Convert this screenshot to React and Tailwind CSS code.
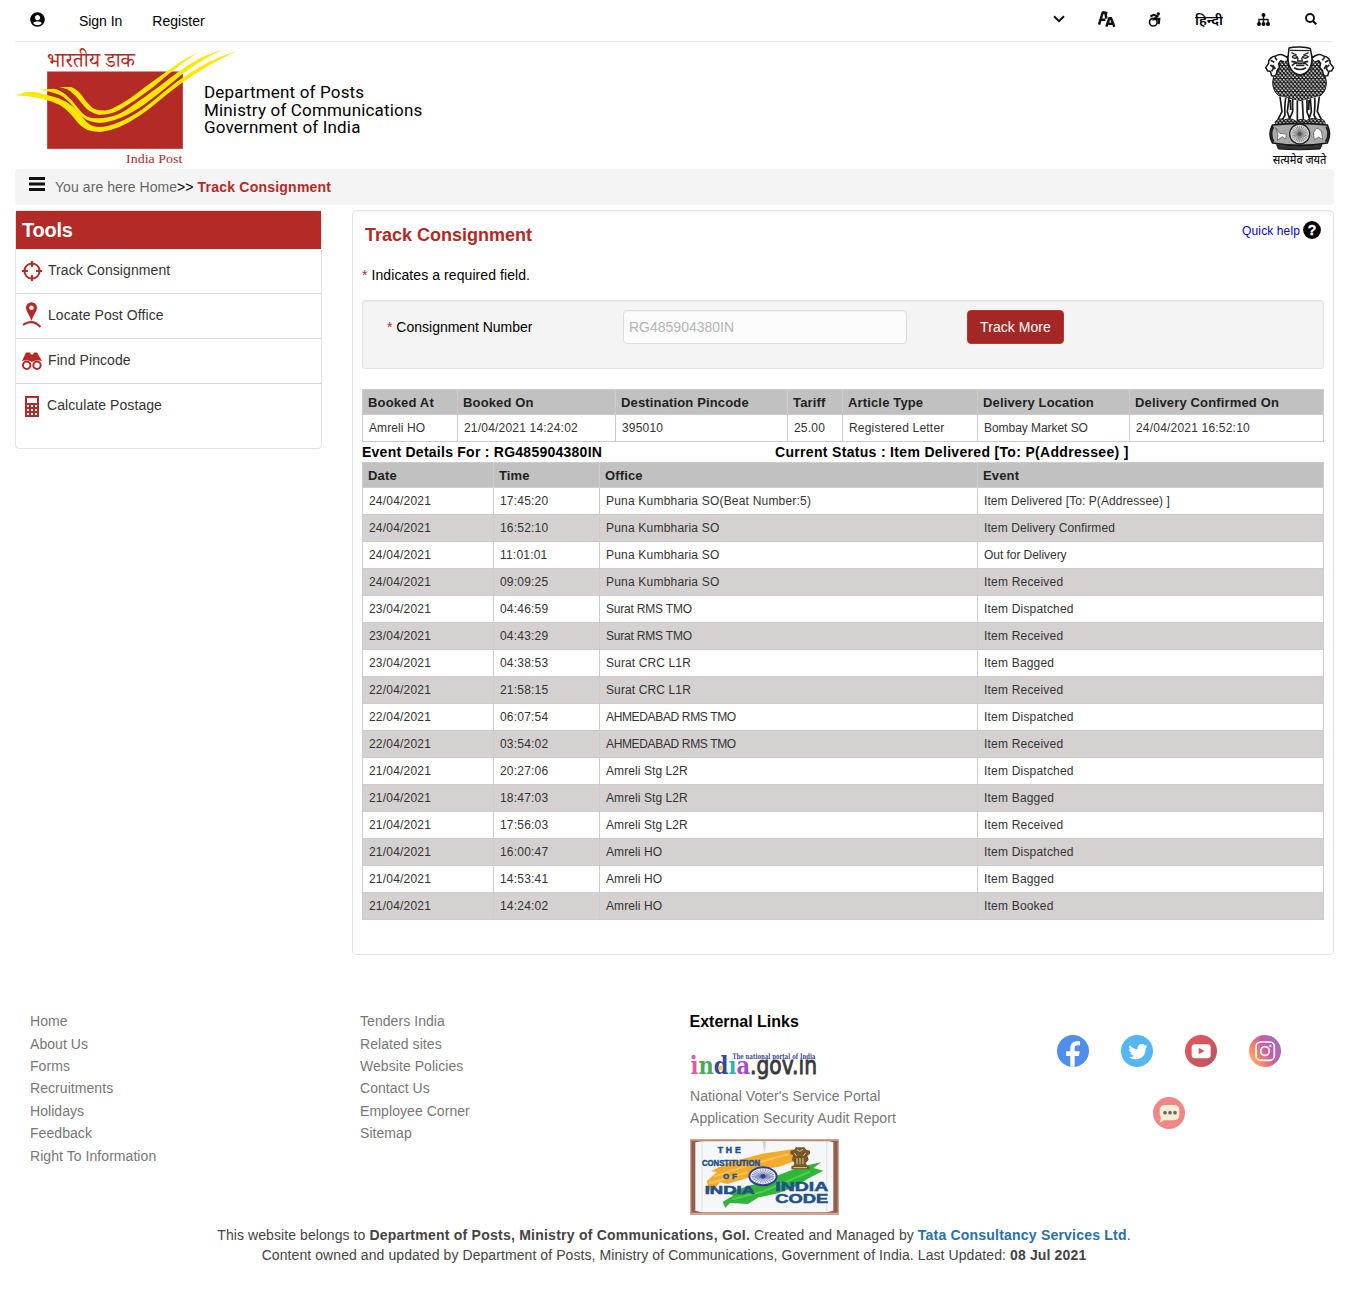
import React from "react";
import { FaUserCircle } from "react-icons/fa";

const red = "#b42a26";

function PostLogo() {
  return (
    <svg viewBox="45 138 666 360" className="h-[120px] w-[222px] shrink-0 overflow-visible">
      <text x="141" y="200" fontFamily="Noto Serif Devanagari, Noto Sans Devanagari, serif" fontSize="64" fill={red} textLength="264" lengthAdjust="spacingAndGlyphs">भारतीय डाक</text>
      <rect x="141.500" y="214.500" width="407" height="232" fill={red} />
      <g fill="#ffe800" transform="translate(30 126)">
        <path d="M15 160L50 150Q80 147 111 159Q175 172 208 213C225 237 240 255 268 255Q320 253 395 203Q430 177 470 143Q525 98 600 58Q640 40 680 28Q640 46 600 69Q550 98 510 127Q475 153 440 182Q410 207 388 221Q330 262 272 270Q225 271 202 241Q178 206 148 188Q95 164 15 160Z" />
        <path d="M88 143L130 140Q145 141 165 156Q190 177 208 203C225 225 242 230 270 229Q312 226 345 206Q405 166 460 124Q510 83 560 54Q600 34 635 24Q598 41 560 66Q520 92 488 121Q450 153 405 186Q330 239 268 243Q225 239 208 215Q172 169 150 159Q125 148 88 143Z" />
        <path d="M148 135H183Q200 141 214 158Q235 189 252 200Q270 208 293 205Q330 192 382 153Q440 109 510 61Q538 42 562 33Q535 49 510 70Q470 100 430 135Q380 174 330 203Q300 219 265 218Q238 213 220 190Q190 151 172 142Z" />
      </g>
      <text x="378" y="490" fontFamily="Liberation Serif, serif" fontSize="40" fill={red} textLength="169" lengthAdjust="spacingAndGlyphs">India Post</text>
    </svg>
  );
}

function Emblem() {
  return (
    <svg viewBox="705 138 207 360" className="h-[120px] w-[69px] shrink-0 overflow-visible">
      <defs>
        <pattern id="mane" width="11" height="13" patternUnits="userSpaceOnUse">
          <rect width="11" height="13" fill="#1c1c1c" />
          <path d="M1 3Q3 8 5 4M6.500 9Q8.500 14 10.500 10" fill="none" stroke="#fff" strokeWidth="3.400" />
        </pattern>
      </defs>
      <path d="M745 180L741 212C722 235 724 272 748 288L768 292L786 297L809 305L833 297L850 292L870 288C893 272 895 235 876 212L872 180L846 168L845 205L810 228L776 205L774 168Z" fill="url(#mane)" stroke="#111" strokeWidth="3" />
      <g fill="#fff" stroke="#151515" strokeWidth="4.500" strokeLinejoin="round">
        <path d="M774 175C762 164 748 160 738 168C722 170 714 180 716 190L707 203L713 213L721 214L725 227C737 232 741 221 741 212L748 202L746 190L752 182L762 186" />
        <path d="M846 175C856 164 870 160 880 168C895 170 902 180 900 190L911 203L904 213L897 214L893 227C881 232 878 221 878 212L869 202L872 190L866 182L856 186" />
        <path d="M777 144C792 140 826 140 841 146L846 174C846 199 835 222 810 225C786 222 774 199 774 174Z" />
      </g>
      <g fill="none" stroke="#222" strokeWidth="4">
        <path d="M780 151L839 152M784 158L800 165M836 158L820 165M786 170Q795 163 802 171Q796 179 786 170M817 171Q826 163 835 170Q826 179 817 171M804 172L803 183H817L815 172" />
        <path d="M784 184L800 187M835 184L820 187M786 197Q794 186 810 190Q825 186 834 197M792 203Q810 214 828 203" strokeWidth="5" />
        <path d="M722 181L733 187M721 195L731 203L725 214M728 195L736 207M896 181L885 187M898 195L888 203L894 214M890 195L882 207M735 172L741 181M884 172L877 181" strokeWidth="5" />
        <path d="M798 196H823" strokeWidth="5" />
      </g>
      <path d="M748 288L755 338L744 362H876L862 338L868 288L834 297L810 304L785 297Z" fill="#fff" />
      <g fill="none" stroke="#181818" strokeWidth="5">
        <path d="M750 290L756 335L744 358M767 294Q763 325 765 345L754 364M777 294L772 335L780 360M788 297V335L778 358M802 302V360M817 302L820 360M831 298V335L840 360M841 295L844 335L836 360M854 293Q856 325 852 345L862 364M868 290L862 335L874 358M781 300L782 330M837 300L836 330" />
      </g>
      <path d="M735 366Q745 351 763 360Q782 351 798 364Q814 353 829 362Q851 350 867 359Q880 352 886 370L881 378H740Z" fill="url(#mane)" stroke="#222" strokeWidth="3" />
      <path d="M728 375Q809 365 892 375Q905 401 892 429Q809 443 728 429Q712 402 728 375Z" fill="#aaa" stroke="#151515" strokeWidth="5" />
      <path d="M730 380Q718 403 731 425M889 380Q901 403 887 425" fill="none" stroke="#222" strokeWidth="6" />
      <path d="M737 383L748 399L769 403L767 417L757 410L742 421L744 404ZM850 398L861 384L874 393L878 419L866 411L853 419Z" fill="#fff" stroke="#444" strokeWidth="2" />
      <circle cx="809" cy="402" r="30" fill="#ddd" stroke="#222" strokeWidth="4" />
      {Array.from({ length: 12 }).map((_, i) => (
        <path key={i} d="M809 377V427" stroke="#666" strokeWidth="2" transform={`rotate(${i * 15} 809 402)`} />
      ))}
      <circle cx="809" cy="402" r="6" fill="#555" />
      <path d="M740 434Q809 443 876 434L870 447Q809 452 745 447Z" fill="#333" stroke="#111" strokeWidth="3" />
      <text x="728" y="491" fontFamily="Noto Sans Devanagari, sans-serif" fontSize="36" fontWeight="500" fill="#111" textLength="161" lengthAdjust="spacingAndGlyphs">सत्यमेव जयते</text>
    </svg>
  );
}

const TopBar = () => (
  <div className="flex h-[42px] justify-between border-b border-[#e7e7e7] text-black">
    <div className="flex h-[42px] items-center pl-[15px]">
      <FaUserCircle className="-mt-[4px] size-[15px]" />
      <span className="ml-[34px] tracking-[-0.05px]">Sign In</span>
      <span className="ml-[30px] tracking-[0.05px]">Register</span>
    </div>
    <div className="flex h-[38px] items-center pr-[17px]">
      <svg viewBox="0 0 12 8" className="mr-[34px] h-2 w-3"><path d="M1 1.200L6 6.200L11 1.200" fill="none" stroke="#111" strokeWidth="2" /></svg>
      <svg viewBox="0 0 48 48" className="mr-[34px] size-4 overflow-visible" fill="none" stroke="#111" strokeWidth="7.500">
        <path d="M0 41L11 5H19L22 23M5 26H19M11 4L25 7" /><path d="M22 47L31 22H36L46 47M26 38H43" />
      </svg>
      <svg viewBox="0 0 36 44" className="mr-[34px] h-[15px] w-3 overflow-visible" fill="none" stroke="#111" strokeWidth="5">
        <circle cx="13" cy="30" r="11.500" /><circle cx="28" cy="5" r="4" fill="#111" strokeWidth="2" /><path d="M4 13L14 8L25 12L16 21L31 20L29 36" strokeWidth="6.500" />
      </svg>
      <svg viewBox="0 0 28 18" className="mt-[2px] mr-[34px] h-[18px] w-[28px]"><text x="0" y="13.500" fontFamily="Noto Sans Devanagari, sans-serif" fontSize="13" fontWeight="600" textLength="28" lengthAdjust="spacingAndGlyphs">हिन्दी</text></svg>
      <svg viewBox="0 0 13 13" className="mr-[35px] size-[13px]"><circle cx="6.500" cy="2" r="2" /><circle cx="2" cy="11" r="2" /><circle cx="6.500" cy="11" r="2" /><circle cx="11" cy="11" r="2" /><path d="M6.500 2V11M2 11V6.500H11V11" fill="none" stroke="#111" strokeWidth="1.400" /></svg>
      <svg viewBox="0 0 12 12" className="size-3" fill="none" stroke="#111"><circle cx="5" cy="5" r="4" strokeWidth="1.900" /><path d="M8 8L11.300 11.300" strokeWidth="2.200" /></svg>
    </div>
  </div>
);

const TrackIcon = () => (
  <svg viewBox="0 0 20 20" className="size-5" fill="none" stroke={red} strokeWidth="2"><circle cx="10" cy="10" r="7.600" /><path d="M10 0V6M10 14V20M0 10H6M14 10H20" /></svg>
);
const PinIcon = () => (
  <svg viewBox="0 0 20 26" className="-mt-[3px] h-[26px] w-5"><path d="M9.500 19C8 14 4 9 4 5.700A5.500 5.500 0 0 1 15 5.700C15 9 11 14 9.500 19Z" fill={red} /><circle cx="9.500" cy="5.700" r="2.200" fill="#fff" /><path d="M1 22.800Q11 16.500 18.500 25" fill="none" stroke={red} strokeWidth="2" /></svg>
);
const BinocularIcon = () => (
  <svg viewBox="0 0 20 18" className="h-[18px] w-5"><path d="M0 9L4 .5H8L9 2.500H11L12 .5H15L20 9Q14 7 10 10Q6 7 0 9Z" fill={red} /><circle cx="4.700" cy="13.200" r="3.700" fill="#fff" stroke={red} strokeWidth="2" /><circle cx="15" cy="13.200" r="3.700" fill="#fff" stroke={red} strokeWidth="2" /></svg>
);
const CalculatorIcon = () => (
  <svg viewBox="0 0 14 21" className="ml-[3px] h-[21px] w-3.5" shapeRendering="crispEdges"><path d="M0 0H14V21H0Z" fill={red} /><path d="M2 2H12V7H2ZM2 9H4V11H2ZM6 9H8V11H6ZM10 9H12V11H10ZM2 13H4V15H2ZM6 13H8V15H6ZM10 13H12V15H10ZM2 17H4V19H2ZM6 17H8V19H6ZM10 17H12V19H10Z" fill="#fff" /></svg>
);

const tools = [
  ["Track Consignment", TrackIcon],
  ["Locate Post Office", PinIcon],
  ["Find Pincode", BinocularIcon],
  ["Calculate Postage", CalculatorIcon],
];

const Tools = () => (
  <aside className="h-[239px] w-[307px] rounded-[4px] border border-[#e3e3e7]">
    <h2 className="h-[38px] bg-[#b42a26] pl-[6px] text-[20px] leading-[38px] font-bold tracking-[-0.25px] text-white">Tools</h2>
    {tools.map(([name, Icon], i) => (
      <div key={name} className={"flex h-[45px] items-center pl-[6px] tracking-[0.08px] text-[#333] " + (i < 3 ? "border-b border-[#d5d6db]" : "")}>
        <span className="w-[26px]"><Icon /></span>
        <span className={i === 3 ? "-mt-[3px] -ml-px" : "-mt-[2px]"}>{name}</span>
      </div>
    ))}
  </aside>
);

const bookingHead = ["Booked At", "Booked On", "Destination Pincode", "Tariff", "Article Type", "Delivery Location", "Delivery Confirmed On"];
const booking = ["Amreli HO", "21/04/2021 14:24:02", "395010", "25.00", "Registered Letter", "Bombay Market SO", "24/04/2021 16:52:10"];
const events = [
  ["24/04/2021", "17:45:20", "Puna Kumbharia SO(Beat Number:5)", "Item Delivered [To: P(Addressee) ]"],
  ["24/04/2021", "16:52:10", "Puna Kumbharia SO", "Item Delivery Confirmed"],
  ["24/04/2021", "11:01:01", "Puna Kumbharia SO", "Out for Delivery"],
  ["24/04/2021", "09:09:25", "Puna Kumbharia SO", "Item Received"],
  ["23/04/2021", "04:46:59", "Surat RMS TMO", "Item Dispatched"],
  ["23/04/2021", "04:43:29", "Surat RMS TMO", "Item Received"],
  ["23/04/2021", "04:38:53", "Surat CRC L1R", "Item Bagged"],
  ["22/04/2021", "21:58:15", "Surat CRC L1R", "Item Received"],
  ["22/04/2021", "06:07:54", "AHMEDABAD RMS TMO", "Item Dispatched"],
  ["22/04/2021", "03:54:02", "AHMEDABAD RMS TMO", "Item Received"],
  ["21/04/2021", "20:27:06", "Amreli Stg L2R", "Item Dispatched"],
  ["21/04/2021", "18:47:03", "Amreli Stg L2R", "Item Bagged"],
  ["21/04/2021", "17:56:03", "Amreli Stg L2R", "Item Received"],
  ["21/04/2021", "16:00:47", "Amreli HO", "Item Dispatched"],
  ["21/04/2021", "14:53:41", "Amreli HO", "Item Bagged"],
  ["21/04/2021", "14:24:02", "Amreli HO", "Item Booked"],
];

const cellTracking = {
  "Item Delivered [To: P(Addressee) ]": "tracking-[0.07px]",
  "Item Delivery Confirmed": "tracking-[0.1px]",
  "Out for Delivery": "tracking-[-0.05px]",
  "Surat RMS TMO": "tracking-[-0.2px]",
  "Surat CRC L1R": "tracking-[0.12px]",
  "AHMEDABAD RMS TMO": "tracking-[-0.35px]",
  "Amreli Stg L2R": "tracking-[0.08px]",
  "Amreli HO": "tracking-[0.1px]",
  "Bombay Market SO": "tracking-[-0.05px]",
};

function DataTable({ cols, head, rows }) {
  return (
    <table className="w-[961px] table-fixed border-collapse text-left whitespace-nowrap">
      <colgroup>{cols.map((w, i) => <col key={i} style={{ width: w }} />)}</colgroup>
      <thead>
        <tr className="h-[25px] bg-[#c1c1c1] text-[13px] leading-4 tracking-[0.15px] text-[#222]">
          {head.map((h) => <th key={h} className="border border-[#ccc] p-0 pt-px pl-[5px] font-bold">{h}</th>)}
        </tr>
      </thead>
      <tbody className="text-[12px] leading-4 tracking-[0.2px] text-[#333]">
        {rows.map((r, i) => (
          <tr key={i} className="h-[27px] even:bg-[#d5d1d0]">
            {r.map((c, j) => <td key={j} className={"border border-[#ccc] p-0 pl-[6px] " + (cellTracking[c] || "")}>{c}</td>)}
          </tr>
        ))}
      </tbody>
    </table>
  );
}

const Panel = () => (
  <main className="h-[745px] w-[982px] rounded-[4px] border border-[#e3e3e3] px-[9px] text-black shadow-[inset_0_1px_1px_rgba(0,0,0,0.05)]">
    <div className="flex h-[48px] justify-between">
      <h1 className="mt-[11px] ml-[3px] text-[18px] leading-[26px] font-bold text-[#b42a26]">Track Consignment</h1>
      <div className="mt-[10px] mr-[3px] flex h-[18px] items-center text-[12px] tracking-[0.12px] text-[#0000e0]">
        <span className="mt-[2px]">Quick help</span>
        <svg viewBox="0 0 18 18" className="ml-[3px] size-[18px]"><circle cx="9" cy="9" r="8.900" fill="#000" /><text x="9" y="13.800" textAnchor="middle" fontSize="14" fontWeight="700" fill="#fff" stroke="#fff" strokeWidth=".4" fontFamily="Liberation Sans">?</text></svg>
      </div>
    </div>
    <p className="mt-[6px] leading-5 tracking-[0.08px]"><span className="text-[#b42a26]">*</span> Indicates a required field.</p>
    <div className="mt-[15px] flex h-[69px] rounded-[3px] border border-[#e3e3e3] bg-[#f4f4f4] pt-[9px] pl-[24px] shadow-[inset_0_1px_1px_rgba(0,0,0,0.05)]">
      <label className="w-[236px] leading-[34px]"><span className="text-[#b42a26]">*</span> Consignment Number</label>
      <div className="h-[34px] w-[284px] rounded-[4px] border border-[#ddd] bg-[#fcfcfc] pl-[5px] leading-[32px] text-[#b5b5b5] shadow-[inset_0_1px_1px_rgba(0,0,0,0.05)]">RG485904380IN</div>
      <button className="ml-[60px] h-[34px] w-[97px] rounded-[4px] border border-[#c9302c] bg-[#a32724] tracking-[0.05px] text-white">Track More</button>
    </div>
    <div className="mt-[20px]">
      <DataTable cols={[95, 158, 172, 55, 135, 152, 194]} head={bookingHead} rows={[booking]} />
      <div className="flex h-5 leading-5 font-bold">
        <span className="w-[413px] tracking-[0.25px]">Event Details For : RG485904380IN</span>
        <span className="whitespace-nowrap tracking-[0.32px]">Current Status : Item Delivered [To: P(Addressee) ]</span>
      </div>
      <DataTable cols={[131, 106, 378, 346]} head={["Date", "Time", "Office", "Event"]} rows={events} />
    </div>
  </main>
);

const IndiaGov = () => (
  <svg viewBox="690 1050 130 34" className="h-[34px] w-[130px] overflow-visible">
    <g fontFamily="DejaVu Serif, serif" fontSize="25" fontWeight="700">
      <circle cx="693.500" cy="1057" r="2.200" fill="#e858a8" />
      <text x="690.500" y="1074" textLength="59.500" lengthAdjust="spacingAndGlyphs">
        <tspan fill="#e858a8">ı</tspan><tspan fill="#48ad55">n</tspan><tspan fill="#33489c">d</tspan><tspan fill="#36b5b0">ı</tspan><tspan fill="#a449d0">a</tspan>
      </text>
      <text x="750" y="1074" fill="#3a3a3a" textLength="67" lengthAdjust="spacingAndGlyphs" fontFamily="DejaVu Sans, sans-serif" fontSize="24" fontWeight="400" stroke="#3a3a3a" strokeWidth=".9">.gov.ın</text>
    </g>
    <circle cx="720.500" cy="1068" r="2.400" fill="#f5cf4a" />
    <text x="732.500" y="1058.500" fontFamily="DejaVu Serif, serif" fontWeight="700" fontSize="7.500" fill="#3b4a98" textLength="83" lengthAdjust="spacingAndGlyphs">The national portal of India</text>
  </svg>
);

const IndiaCode = () => (
  <svg viewBox="30 417 447 228" className="h-[76px] w-[149px]" preserveAspectRatio="none">
    <rect x="30" y="417" width="447" height="228" fill="#d3a48f" />
    <rect x="34" y="422" width="439" height="216" fill="#925d4c" />
    <path d="M46 427Q65 422 82 424L252 423L449 424L460 427V632L440 637H66L46 632Z" fill="#f5f7f8" />
    <path d="M248 424H257L254 455ZM66 425V634M440 425V634" fill="#c9cdd2" stroke="#d5dade" strokeWidth="2" />
    <path d="M80 544L110 517L93 513L145 488L247 461L342 447L330 462L391 464L338 486L297 500L237 510L205 533L142 552L119 547L92 583Z" fill="#f3aa2d" />
    <path d="M102 530L210 494L325 463M88 550L203 517" fill="none" stroke="#f9c35a" strokeWidth="6" />
    <path d="M128 605L160 587L140 578L225 552L291 527L361 500L423 487L401 504L430 512L386 535L346 560L293 580L236 592L204 612L150 609L136 623Z" fill="#2fb537" />
    <path d="M156 598L248 575L390 515" fill="none" stroke="#50cf4e" strokeWidth="6" />
    <ellipse cx="249" cy="529" rx="41" ry="27" fill="#e9eef8" stroke="#343d96" strokeWidth="6" />
    {Array.from({ length: 12 }).map((_, i) => {
      const a = (i * Math.PI) / 12;
      return <path key={i} d={`M${249 - 34 * Math.cos(a)} ${529 - 22 * Math.sin(a)}L${249 + 34 * Math.cos(a)} ${529 + 22 * Math.sin(a)}`} stroke="#5260ac" strokeWidth="2" />;
    })}
    <circle cx="249" cy="529" r="7" fill="#343d96" />
    <g fill="#76562b"><path d="M347 442H373L379 449L390 452V462L382 466L386 480L377 489L381 496L388 499V508H334V499L341 496L343 488L336 480L339 466L331 462V452L343 449Z" /><path d="M351 449L359 454L369 448M343 459L350 468M377 459L370 468M351 474L351 493M360 474V493M369 474V493M340 503H381" fill="none" stroke="#e3c98f" strokeWidth="3" /></g>
    <g fill="#245087" stroke="#245087" strokeWidth="1.500" fontFamily="Liberation Sans, sans-serif" fontWeight="700">
      <text x="113" y="459" fontSize="26" textLength="69" lengthAdjust="spacing">THE</text>
      <text x="66" y="497" fontSize="25" textLength="174" lengthAdjust="spacingAndGlyphs">CONSTITUTION</text>
      <text x="129" y="538" fontSize="24" textLength="42" lengthAdjust="spacing">OF</text>
      <text x="74" y="583" fontSize="31" textLength="151" lengthAdjust="spacingAndGlyphs">INDIA</text>
      <text x="286" y="573" fontSize="37" textLength="159" lengthAdjust="spacingAndGlyphs">INDIA</text>
      <text x="286" y="610" fontSize="36" textLength="159" lengthAdjust="spacingAndGlyphs">CODE</text>
    </g>
  </svg>
);

const Social = () => (
  <div className="flex w-[256px] flex-wrap justify-center gap-y-[30px]">
    <svg viewBox="0 0 96 96" className="mx-4 size-8"><circle cx="48" cy="48" r="48" fill="#4f8eea" /><path d="M40 95V63H27V49H40V39C40 24 49 17 69 19V31H62C55 31 53 34 53 40V49H68L66 63H53V95Z" fill="#fff" /></svg>
    <svg viewBox="0 0 96 96" className="mx-4 size-8"><circle cx="48" cy="48" r="48" fill="#54b6f2" /><path d="M26 31C33 39 42 43 50 43C48 33 55 27 62 27C67 27 70 29 72 32L78 29L75 35L79 35L74 40C75 60 61 74 43 73C36 73 28 71 23 67C30 67 35 66 39 62C33 61 30 58 28 54H33C27 51 24 47 24 42L29 43C24 39 23 35 26 31Z" fill="#fff" /></svg>
    <svg viewBox="0 0 96 96" className="mx-4 size-8"><defs><linearGradient id="yt" x2="1" y2="1"><stop stopColor="#e9575c" /><stop offset="1" stopColor="#ba555c" /></linearGradient></defs><circle cx="48" cy="48" r="48" fill="url(#yt)" /><rect x="20" y="28" width="57" height="42" rx="10" fill="#fff" /><path d="M41 38V58L59 48Z" fill="#d7565b" /></svg>
    <svg viewBox="0 0 96 96" className="mx-4 size-8"><defs><linearGradient id="ig" x1="0" y1=".8" x2="1" y2=".2"><stop stopColor="#ffb565" /><stop offset=".25" stopColor="#f58969" /><stop offset=".55" stopColor="#d05a9f" /><stop offset="1" stopColor="#9476ca" /></linearGradient></defs><circle cx="48" cy="48" r="48" fill="url(#ig)" /><g fill="none" stroke="#fff" strokeWidth="5"><rect x="21" y="21" width="55" height="55" rx="14" /><circle cx="48" cy="48" r="13" /></g><circle cx="64" cy="33" r="3.500" fill="#fff" /></svg>
    <svg viewBox="0 0 96 96" className="mx-4 size-8"><circle cx="48" cy="48" r="48" fill="#f28588" /><path d="M38 24H61Q79 24 79 40V54Q79 70 61 70H34L20 77L24 62Q20 58 20 51V40Q20 24 38 24Z" fill="#f2efd4" /><g fill="#6e666c"><circle cx="36" cy="47" r="5.500" /><circle cx="51" cy="47" r="5.500" /><circle cx="66" cy="47" r="5.500" /></g></svg>
  </div>
);

const Links = ({ items }) => (
  <ul className="pt-[0.2px] leading-[22.4px] tracking-[0.06px]">{items.map((t) => <li key={t}>{t}</li>)}</ul>
);

const Footer = () => (
  <footer className="mt-[55px]">
    <div className="flex h-[215px] text-[#777]">
      <div className="w-[330px] pl-[15px]"><Links items={["Home", "About Us", "Forms", "Recruitments", "Holidays", "Feedback", "Right To Information"]} /></div>
      <div className="w-[330px] pl-[15px]"><Links items={["Tenders India", "Related sites", "Website Policies", "Contact Us", "Employee Corner", "Sitemap"]} /></div>
      <div className="w-[366px] pl-[15px]">
        <h3 className="-ml-[0.5px] text-[16px] leading-6 font-bold text-black">External Links</h3>
        <div className="mt-[16px] flex flex-col">
          <IndiaGov />
          <div className="mt-[0.85px] h-[54.15px]"><Links items={["National Voter's Service Portal", "Application Security Audit Report"]} /></div>
          <IndiaCode />
        </div>
      </div>
      <div className="pt-[25px]"><Social /></div>
    </div>
    <div className="pr-px text-center leading-5 tracking-[0.08px] text-[#444]">
      <p>This website belongs to <b className="tracking-[0.24px]">Department of Posts, Ministry of Communications, GoI.</b> Created and Managed by <b className="tracking-[0.21px] text-[#286fad]">Tata Consultancy Services Ltd</b>.</p>
      <p>Content owned and updated by Department of Posts, Ministry of Communications, Government of India. Last Updated: <b className="tracking-[0.15px]">08 Jul 2021</b></p>
    </div>
  </footer>
);

export default function App() {
  return (
    <div className="h-[1315px] w-[1349px] overflow-hidden bg-white px-[15px] font-['Liberation_Sans',Arial,sans-serif] text-[14px]">
      <TopBar />
      <header className="flex h-[127px] items-start pt-[4px]">
        <PostLogo />
        <div className="mt-[38px] ml-[-33px] font-['Roboto',sans-serif] text-[17px] leading-[17.5px] tracking-[0.17px] text-black">
          <p>Department of Posts</p>
          <p>Ministry of Communications</p>
          <p>Government of India</p>
        </div>
        <div className="ml-auto"><Emblem /></div>
      </header>
      <nav className="flex h-[36px] items-center rounded-[4px] bg-[#f4f4f4] pl-[14px] text-[#666]">
        <svg viewBox="0 0 16 14" className="-mt-[6px] mr-[10px] h-3.5 w-4"><path d="M0 1.500H16M0 7H16M0 12.500H16" stroke="#111" strokeWidth="2.900" /></svg>
        <span className="whitespace-pre tracking-[0.07px]">You are here Home<span className="text-black">&gt;&gt; </span><b className="tracking-[0.22px] text-[#b42a26]">Track Consignment</b></span>
      </nav>
      <div className="mt-[5px] flex gap-[30px]">
        <Tools />
        <Panel />
      </div>
      <Footer />
    </div>
  );
}
